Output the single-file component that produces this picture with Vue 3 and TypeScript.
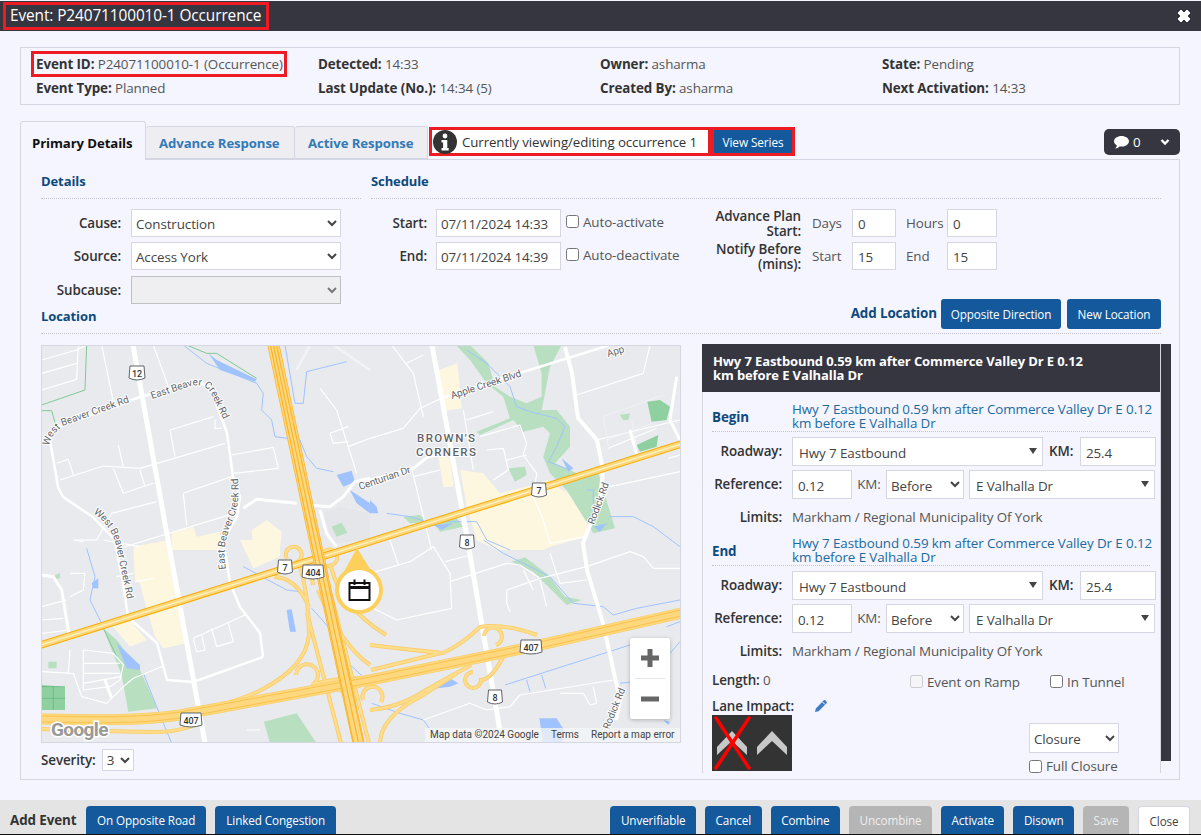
<script setup lang="ts">
interface Field { label: string; value: string; boxed?: boolean }
interface FooterButton { text: string; disabled?: boolean; plain?: boolean }
interface Shield { x: number; y: number; label: string; w: number }

const infoFields: Field[] = [
  { label: 'Event ID:', value: 'P24071100010-1 (Occurrence)', boxed: true },
  { label: 'Detected:', value: '14:33' },
  { label: 'Owner:', value: 'asharma' },
  { label: 'State:', value: 'Pending' },
  { label: 'Event Type:', value: 'Planned' },
  { label: 'Last Update (No.):', value: '14:34 (5)' },
  { label: 'Created By:', value: 'asharma' },
  { label: 'Next Activation:', value: '14:33' }
];

const rightButtons: FooterButton[] = [
  { text: 'Unverifiable' },
  { text: 'Cancel' },
  { text: 'Combine' },
  { text: 'Uncombine', disabled: true },
  { text: 'Activate' },
  { text: 'Disown' },
  { text: 'Save', disabled: true },
  { text: 'Close', plain: true }
];

const locationText = 'Hwy 7 Eastbound 0.59 km after Commerce Valley Dr E 0.12 km before E Valhalla Dr';
const endpoints = ['Begin', 'End'];

// map shields, in map pixels
const shields: Shield[] = [
  { x: 96, y: 28, label: '12', w: 14 },
  { x: 244, y: 222, label: '7', w: 13 },
  { x: 272, y: 227, label: '404', w: 20 },
  { x: 150, y: 375, label: '407', w: 20 },
  { x: 498, y: 145, label: '7', w: 13 },
  { x: 426, y: 197, label: '8', w: 13 },
  { x: 490, y: 302, label: '407', w: 20 },
  { x: 454, y: 352, label: '8', w: 13 }
];

// ramps around the three interchanges
const ramps: string[] = [
  'M233,232 Q255,232 268,262',
  'M258,218 Q268,250 268,290 Q265,322 220,345 Q190,360 150,366',
  'M246,214 a8,8 0 1,1 10,3 Q270,222 272,240',
  'M281,216 a8,8 0 1,1 10,4 Q280,222 276,230',
  'M290,222 Q300,262 345,290',
  'M277,245 Q300,300 329,320',
  'M255,330 a11,11 0 1,1 16,10 Q300,330 340,335',
  'M322,355 a10,10 0 1,1 18,2',
  'M329,300 Q370,305 402,308 Q420,300 439,282 Q462,278 496,290',
  'M339,398 Q340,372 379,352 L416,328',
  'M316,398 Q322,370 300,345',
  'M329,365 Q360,362 385,345 L430,320',
  'M443,291 a9,9 0 1,1 12,9',
  'M432,327 a8,8 0 1,0 8,8 Q450,335 462,312',
  'M0,384 Q60,386 110,387 Q135,388 160,378',
  'M330,325 L400,308',
  'M266,268 L300,398',
  'M290,250 L328,398'
];
</script>

<template>
  <div class="modal">
    <header class="title-bar">
      <span class="title-box">Event: P24071100010-1 Occurrence</span>
      <svg class="close-x" viewBox="0 0 16 16" width="16" height="16">
        <path d="M2 5l3-3 3 3 3-3 3 3-3 3 3 3-3 3-3-3-3 3-3-3 3-3z" fill="#fff" stroke="#fff" stroke-linejoin="round" />
      </svg>
    </header>

    <section class="info-box">
      <div v-for="f in infoFields" :key="f.label" class="info-cell">
        <span :class="{ 'red-box': f.boxed }"><b>{{ f.label }}</b> {{ f.value }}</span>
      </div>
    </section>

    <nav class="tabs">
      <div class="tab active">Primary Details</div>
      <div class="tab adv">Advance Response</div>
      <div class="tab last">Active Response</div>
      <div class="occurrence">
        <svg width="24" height="24" viewBox="0 0 24 24">
          <circle cx="12" cy="12" r="12" fill="#333" />
          <circle cx="12" cy="6" r="2.4" fill="#fff" />
          <path d="M8.5 10h5.8v8h1.4v2.5H8.5V18h1.6v-5.5H8.5z" fill="#fff" />
        </svg>
        <span>Currently viewing/editing occurrence 1</span>
      </div>
      <div class="series-box"><button class="btn series">View Series</button></div>
      <div class="comments">
        <svg width="15" height="13" viewBox="0 0 15 13">
          <path d="M7.5 0C3.4 0 0 2.3 0 5.3c0 1.700 1.100 3.200 2.900 4.200-.3 1.200-1 2.200-1.700 3 1.700-.2 3.300-1 4.400-2.100.6.100 1.200.2 1.900.2 4.100 0 7.500-2.300 7.500-5.300S11.600 0 7.500 0z" fill="#fff" />
        </svg>
        <span>0</span>
        <svg class="chev" width="10" height="8" viewBox="0 0 10 8">
          <path d="M1.500 2 5 5.500 8.500 2" fill="none" stroke="#fff" stroke-width="2.400" />
        </svg>
      </div>
    </nav>

    <main class="panel">
      <div class="top">
        <div class="details">
          <h3 class="head">Details</h3>
          <div class="form-row">
            <label>Cause:</label>
            <select class="field wide"><option>Construction</option></select>
          </div>
          <div class="form-row">
            <label>Source:</label>
            <select class="field wide"><option>Access York</option></select>
          </div>
          <div class="form-row sub">
            <label>Subcause:</label>
            <select class="field wide" disabled><option></option></select>
          </div>
        </div>
        <div class="schedule">
          <h3 class="head">Schedule</h3>
          <div class="schedule-body">
            <div class="dates">
              <div class="form-row">
                <label class="short">Start:</label>
                <input class="field date" value="07/11/2024 14:33" />
                <label class="check"><input type="checkbox" />Auto-activate</label>
              </div>
              <div class="form-row">
                <label class="short">End:</label>
                <input class="field date" value="07/11/2024 14:39" />
                <label class="check"><input type="checkbox" />Auto-deactivate</label>
              </div>
            </div>
            <div class="plans">
              <div class="form-row">
                <label class="plan-label">Advance Plan Start:</label>
                <span class="unit first">Days</span>
                <input class="field tiny" value="0" />
                <span class="unit">Hours</span>
                <input class="field small" value="0" />
              </div>
              <div class="form-row">
                <label class="plan-label">Notify Before (mins):</label>
                <span class="unit first">Start</span>
                <input class="field tiny" value="15" />
                <span class="unit">End</span>
                <input class="field small" value="15" />
              </div>
            </div>
          </div>
        </div>
      </div>

      <div class="location-head">
        <h3>Location</h3>
        <div class="location-actions">
          <b>Add Location</b>
          <button class="btn tall">Opposite Direction</button>
          <button class="btn tall">New Location</button>
        </div>
      </div>

      <div class="location-body">
        <div class="map-col">
          <div class="map">
            <svg viewBox="0 0 640 398" width="640" height="398">
              <rect width="640" height="398" fill="#e8eaed" />

              <!-- north west -->
              <g transform="translate(-1,-5) scale(.3333)">
                <path class="cream" d="M395 580L460 560 470 590 540 575 545 630H395zM635 570L680 540 725 575 720 630H640z" />
                <path d="M850 520L900 500 990 520V600L880 610z" fill="#e4e6e9" />
                <path class="park" d="M875 560L905 548 922 578 890 590z" />
                <path class="water" d="M890 405L935 392 945 425 910 440zM930 450L990 490V520L950 490z" />
                <path class="water" d="M505 40L530 60 650 118 645 125 540 90z" />
                <path class="trail" d="M140 15L135 150 5 195M5 212H35L50 265M440 15L500 40 530 40 650 115" />
                <path class="stream" d="M430 15L500 70 650 130 670 160 665 210 695 240 705 290 780 300 800 350 830 385 880 395M735 15L765 190 790 190 800 95 920 65" />
                <path class="road" d="M5 60L110 30 140 15M5 100L110 70M5 150L110 118 115 15M185 15L220 185M340 15L385 140M60 420L190 378 300 385 555 310M50 370L85 358 100 405M390 270L520 230M390 270L405 350M235 315L250 380M220 385L250 460 340 430M300 390L315 440M575 345L700 322 715 385 580 400M430 460L575 410M430 460L440 555M840 145L890 210 950 400M870 280L925 260M870 280L880 310 925 305M925 320L990 295M105 600H170L215 520 350 485M240 625L600 515M525 240L525 265H545" />
                <path class="road wide-road" d="M610 505L650 478 770 490M805 495L870 500 910 470 945 425 990 415M840 510L860 580 890 620" />
                <path d="M770 90L810 15M880 15L990 90" stroke="#f1f3f4" stroke-width="8" fill="none" />
              </g>

              <!-- north east -->
              <g transform="translate(329,-5) scale(.3333)">
                <path class="cream" d="M207 90L262 70 275 205 225 212zM205 350L240 350 250 440 220 440zM270 390L340 400 390 460 490 435 530 420 560 440 670 500 650 590 540 620 520 630H380L320 600 290 500 280 440z" />
                <path class="park" d="M258 15H300L355 70 375 140 420 170 470 190 515 170 515 100 490 15H575L540 80 525 160 515 210 560 210 600 260V320L555 370 620 400H685L735 565 670 580 590 450 540 400 520 350 540 280 520 260 460 275 430 240 330 285 320 275 420 235 400 170 350 130 300 60zM415 385L465 380 470 405 435 425zM750 225L780 220 775 240 760 240zM100 530L150 525 170 545 120 550zM190 545L260 535 280 560 210 575z" />
                <path class="park dark" d="M832 185L870 180 900 200 890 240 845 245zM800 315L865 285 860 320 810 335z" />
                <path class="water" d="M0 480L20 500 25 520H0zM190 555L250 550 215 570zM670 560L710 550 690 575zM575 355L610 385 595 395z" />
                <path class="stream" d="M290 30L350 70 420 140 440 200 480 215 560 235 585 260 560 320 535 365 600 390M50 520L120 530 170 545 320 545 350 600 420 630M720 530L790 530 850 560 930 620M650 450L670 450 670 500" />
                <path class="road" d="M65 15L130 100 160 230M0 295L100 265 150 205 215 175M290 240L370 215M330 290L450 255 470 310 460 345 500 400 490 470 520 540 540 610 650 590M350 330L400 325 415 390 370 420M125 385L160 530 185 630M620 165L820 100 840 15M680 300L930 240M720 440L930 395M715 325L860 265M895 355L930 345M130 410L210 390M410 360L470 345M280 210L310 390M110 70L160 45" />
                <path d="M700 230L880 165M700 230L715 320M785 240L800 320M710 300L850 250" stroke="#f1f3f4" stroke-width="2.500" fill="none" />
                <path class="road wide-road" d="M0 420L130 385 175 350 210 345M920 110L900 240 930 300" />
                <path class="road wide-road" d="M780 270L800 345" />
              </g>

              <!-- south west -->
              <g transform="translate(-1,195) scale(.3333)">
                <path class="cream" d="M280 20L385 0 410 110 425 180 440 310 370 325 345 290 315 190 300 130 285 120zM600 0H720V50L640 85zM210 250L270 240 320 300 270 320z" />
                <path class="park" d="M190 265L230 300 300 390 345 490 350 505 265 515 245 405zM672 545L770 520 830 610H690zM45 105L60 100 60 115 45 118zM25 365H50V385H25z" />
                <path class="park dark" d="M5 435L75 440V510H5z" />
                <path class="water" d="M230 310L300 375V390L260 385zM740 210L755 208 768 275 750 275zM155 130L175 115V145L160 145z" />
                <path class="stream" d="M140 25L165 110 150 180 190 260M310 400L350 500 395 610M610 80L740 150 780 155M815 205L900 300 905 350 990 430" />
                <path class="trail" d="M190 265L230 350" />
                <path class="road" d="M5 200L80 180M90 100H135L130 150 90 170M130 330L220 340 250 375 240 420 210 440M130 370L240 370M130 400L240 400M130 430L240 410M130 330V450L210 440M5 395L100 400 125 470 200 490 250 440 280 415 370 378M90 330L85 400M460 295L615 225M460 295L470 335 495 330 485 285M515 265L530 320 580 305 565 250M620 570H660M190 0L300 20M5 240L70 235M5 280L90 270M100 0L130 5M230 110L280 100M285 125L340 115" />
                <path d="M5 440H75M40 440V510M5 475H75" stroke="#4caf6f" stroke-width="1.500" fill="none" />
                <path class="road wide-road" d="M5 105L40 110 65 150 90 300M195 420L215 475" />
              </g>

              <!-- south east -->
              <g transform="translate(329,195) scale(.3333)">
                <path class="park" d="M425 65L465 52 535 105 585 170 635 180 590 195 545 150 490 95z" />
                <path class="water" d="M200 445L245 418 265 430 240 440zM508 535H560L585 575 575 610H520zM880 540L900 545 895 555z" />
                <path class="stream" d="M405 435L780 315M470 420L480 455M515 405L527 445M340 0L400 40 540 110 610 190 700 200 730 225 800 205 930 180M5 490L90 520 160 540 210 610M900 340L930 305M750 430L790 425M890 260L930 245" />
                <path class="road" d="M0 100L120 65 190 20 240 100 245 205 80 240 0 200M225 65L300 45M240 125L410 70 450 75 510 115 650 80 780 35 820 50 850 85H930M410 150L510 115M410 150V190L420 215M460 90L490 150M510 120L530 200M540 40L570 130 650 120M160 540L300 490 350 510 420 500 450 465 730 420M570 460H640L660 495 680 490 670 440M60 0L85 75" />
              </g>

              <!-- arterial roads -->
              <path class="major" d="M92 0L127 195 164 398" />
              <path class="major" d="M391 0L426 192 461 398" />
              <path class="major thin" d="M524 2L531 28 537 73 556 95 562 125 559 155 542 198 546 225 562 278 579 355 575 375" />
              <path class="major thinner" d="M401 53L482 27 569 0" />
              <path class="major thinner" d="M9 95L16 82 99 52 156 37 169 42 186 88 192 132 199 152 196 172 182 195 184 205 189 238 199 262 219 288 222 312" />
              <path class="major thinner" d="M9 95L17 142 22 152 52 172 71 192 74 195 82 238 87 272 116 298 126 335 152 337 222 312" />

              <!-- highways -->
              <path v-for="r in ramps" :key="r" class="ramp-edge" :d="r" />
              <path v-for="r in ramps" :key="r + 'i'" class="ramp" :d="r" />
              <path class="hw407-edge" d="M0 374C50 375 100 376 139 370L329 335 490 302 640 268" />
              <path class="hw407" d="M0 374C50 375 100 376 139 370L329 335 490 302 640 268" />
              <path class="hw407-line" d="M0 371C50 372 100 373 139 367L329 332 490 299 640 265M0 377C50 378 100 379 139 373L329 338 490 305 640 271" />
              <path class="hw7-edge" d="M0 300L640 99" />
              <path class="hw7" d="M0 300L640 99" />
              <path class="hw7-line" d="M0 300L640 99" />
              <path class="hw404-edge" d="M232 -2L276 205 318 400" />
              <path class="hw404" d="M232 -2L276 205 318 400" />
              <path class="hw404-line" d="M229 -2L272 205 313 400M232 -2L276 205 318 400M235 -2L280 205 323 400" />

              <!-- labels -->
              <path id="lb1" d="M8 101Q10 88 24 80L92 56" fill="none" />
              <path id="lb2" d="M111 54L150 41Q163 38 170 48L183 76" fill="none" />
              <path id="lb3" d="M52 168Q70 180 75 200L87 258" fill="none" />
              <path id="lb4" d="M185 224Q180 200 192 175Q199 160 197 133" fill="none" />
              <text class="lbl"><textPath href="#lb1">West Beaver Creek Rd</textPath></text>
              <text class="lbl"><textPath href="#lb2">East Beaver Creek Rd</textPath></text>
              <text class="lbl"><textPath href="#lb3">West Beaver Creek Rd</textPath></text>
              <text class="lbl"><textPath href="#lb4">East Beaver Creek Rd</textPath></text>
              <text class="lbl" transform="translate(411,54) rotate(-18)">Apple Creek Blvd</text>
              <text class="lbl" transform="translate(567,12) rotate(-17)">App</text>
              <text class="lbl" transform="translate(319,145) rotate(-19)">Centurian Dr</text>
              <text class="lbl" transform="translate(553,180) rotate(-70)">Rodick Rd</text>
              <text class="lbl" transform="translate(568,385) rotate(-68)">Rodick Rd</text>
              <text class="place" x="376" y="97">BROWN'S</text>
              <text class="place" x="375" y="111">CORNERS</text>

              <g v-for="s in shields" :key="s.x" :transform="`translate(${s.x},${s.y})`">
                <path
                  :d="`M${-s.w / 2} -7H${s.w / 2}L${s.w / 2 + 1} 5Q0 9 ${-s.w / 2 - 1} 5Z`"
                  fill="#fff"
                  stroke="#5f6368"
                  stroke-width="1"
                />
                <text class="shield" y="3.500" text-anchor="middle">{{ s.label }}</text>
              </g>

              <!-- event marker -->
              <path d="M316 203L300 232H334Z" fill="#fdd05c" />
              <circle cx="318" cy="245" r="24" fill="#fdd05c" />
              <circle cx="318" cy="245" r="20" fill="#fff" />
              <g fill="none" stroke="#111" stroke-width="2">
                <rect x="308.500" y="238" width="20" height="17" />
                <path d="M308.500 242.500H328.500" stroke-width="3" />
                <path d="M313.500 234.500V240M323.500 234.500V240" />
              </g>

              <text class="google" x="10" y="391">Google</text>
            </svg>
            <div class="zoom-ctl">
              <svg width="40" height="81" viewBox="0 0 40 81">
                <path d="M11 20H29M20 11V29" stroke="#666" stroke-width="5" />
                <path d="M5 40.500H35" stroke="#e6e6e6" />
                <path d="M11 61H29" stroke="#666" stroke-width="5" />
              </svg>
            </div>
            <div class="attribution">
              <span>Map data ©2024 Google</span>
              <span>Terms</span>
              <span>Report a map error</span>
            </div>
          </div>
          <div class="severity">
            <b>Severity:</b>
            <select class="sev"><option>3</option></select>
          </div>
        </div>

        <div class="loc-wrap">
          <div class="loc-panel">
            <div class="loc-title">Hwy 7 Eastbound 0.59 km after Commerce Valley Dr E 0.12 km before E Valhalla Dr</div>
            <div v-for="name in endpoints" :key="name" class="endpoint">
              <div class="ep-head">
                <b>{{ name }}</b>
                <span>{{ locationText }}</span>
              </div>
              <div class="ep-row">
                <label>Roadway:</label>
                <div class="field combo road-combo">Hwy 7 Eastbound<i class="tri" /></div>
                <b class="km">KM:</b>
                <input class="field km-input" value="25.4" />
              </div>
              <div class="ep-row">
                <label>Reference:</label>
                <input class="field ref-input" value="0.12" />
                <span class="km-light">KM:</span>
                <select class="field before"><option>Before</option></select>
                <div class="field combo ref-combo">E Valhalla Dr<i class="tri" /></div>
              </div>
              <div class="ep-limits">
                <label>Limits:</label>
                <span>Markham / Regional Municipality Of York</span>
              </div>
            </div>
            <div class="length-row">
              <span class="length"><b>Length:</b> 0</span>
              <label class="check ramp-check"><input type="checkbox" disabled />Event on Ramp</label>
              <label class="check"><input type="checkbox" />In Tunnel</label>
            </div>
            <div class="impact-head">
              <b>Lane Impact:</b>
              <svg width="14" height="14" viewBox="0 0 14 14">
                <path d="M1 13l.8-3.600L9.600 1.600a1.400 1.400 0 0 1 2 0l.8.8a1.400 1.400 0 0 1 0 2L4.600 12.200z" fill="#3f7cc4" />
                <path d="M8.500 3l2.500 2.500" stroke="#fff" />
              </svg>
            </div>
            <div class="impact-body">
              <svg width="80" height="56" viewBox="0 0 80 56">
                <rect width="80" height="56" fill="#333" />
                <path d="M5 32L20 16 35 32V40L20 26 5 40zM45 32L60 16 75 32V40L60 26 45 40z" fill="#c8c8c8" />
                <path d="M4 3L37 53M37 3L4 53" stroke="#f00" stroke-width="3.500" stroke-linecap="round" />
              </svg>
              <div class="closure">
                <select class="field closure-select"><option>Closure</option></select>
                <label class="check"><input type="checkbox" />Full Closure</label>
              </div>
            </div>
          </div>
          <div class="scrollbar"></div>
        </div>
      </div>
    </main>

    <footer class="footer">
      <b class="add-event">Add Event</b>
      <button class="btn foot">On Opposite Road</button>
      <button class="btn foot">Linked Congestion</button>
      <div class="foot-right">
        <button
          v-for="b in rightButtons"
          :key="b.text"
          class="btn foot"
          :class="{ disabled: b.disabled, plain: b.plain }"
        >{{ b.text }}</button>
      </div>
    </footer>
  </div>
</template>

<style>
html, body { margin: 0; background: #f4f5fe; }
</style>

<style scoped>
.modal {
  width: 1201px;
  height: 835px;
  overflow: hidden;
  position: relative;
  background: #f4f5fe;
  font-family: "Open Sans", "Noto Sans", sans-serif;
  font-size: 13.400px;
  color: #555;
  letter-spacing: -0.1px;
  display: flex;
  flex-direction: column;
}
b, label { color: #333; font-weight: 600; }

.title-bar {
  margin-top: 1px;
  height: 30px;
  flex: none;
  background: #363640;
  color: #fff;
  display: flex;
  align-items: center;
  justify-content: space-between;
  padding: 0 9px 0 3px;
  font-size: 15.400px;
}
.title-box {
  border: 3px solid #ed1c24;
  padding: 1px 5px 1px 4px;
  height: 20px;
  line-height: 20px;
}

.info-box {
  margin: 16px 21px 0 20px;
  height: 58px;
  flex: none;
  box-sizing: border-box;
  border: 1px solid #d5d6e4;
  display: grid;
  grid-template-columns: repeat(4, 282px);
  grid-template-rows: 24px 24px;
  padding: 4px 0 0 15px;
  align-items: center;
}
.info-cell { white-space: nowrap; }
.info-cell b { font-weight: 700; }
.red-box {
  border: 3px solid #ed1c24;
  margin-left: -5px;
  padding: 1px 1px 1px 2px;
}

.tabs {
  margin: 16px 21px 0 20px;
  height: 38px;
  flex: none;
  display: flex;
  align-items: flex-end;
  position: relative;
  z-index: 1;
}
.tab {
  height: 33px;
  box-sizing: border-box;
  line-height: 32px;
  padding: 0 13px;
  background: #ededf2;
  border: 1px solid #d5d6e4;
  border-width: 1px 1px 1px 0;
  color: #337ab7;
  font-weight: 700;
  font-size: 13.200px;
  border-radius: 3px 3px 0 0;
  white-space: nowrap;
}
.tab.adv { width: 149px; }
.tab.last { width: 133px; }
.tab.active {
  height: 39px;
  width: 126px;
  line-height: 42px;
  padding: 0 0 0 11px;
  background: #f4f5fe;
  color: #111;
  border-width: 1px 1px 0 1px;
  margin-bottom: -1px;
}
.occurrence {
  margin: 0 0 3px 1px;
  height: 29px;
  width: 282px;
  box-sizing: border-box;
  border: 3px solid #ed1c24;
  background: #fff;
  display: flex;
  align-items: center;
  gap: 5px;
  padding-left: 1px;
  color: #333;
  font-size: 13.300px;
  white-space: nowrap;
}
.series-box {
  margin-bottom: 3px;
  height: 29px;
  box-sizing: border-box;
  border: 3px solid #ed1c24;
  padding-left: 0;
}
.series {
  height: 23px;
  width: 78px;
  padding: 0;
  font-size: 11.800px;
  border-radius: 0;
}
.comments {
  margin: 0 0 4px auto;
  width: 76px;
  height: 26px;
  box-sizing: border-box;
  background: #363640;
  border-radius: 5px;
  color: #fff;
  display: flex;
  align-items: center;
  padding-left: 10px;
  gap: 4px;
  font-size: 13.400px;
}
.chev { margin-left: auto; margin-right: 10px; }

.panel {
  margin: 0 21px 0 20px;
  height: 621px;
  flex: none;
  box-sizing: border-box;
  border: 1px solid #d5d6e4;
  padding: 0 18px 0 20px;
}
.top { display: flex; gap: 10px; height: 139px; }
.details { width: 320px; flex: none; }
.schedule { flex: 1; }
.head {
  margin: 0 0 10px;
  height: 39px;
  box-sizing: border-box;
  border-bottom: 1px dotted #c4c5d4;
  line-height: 43px;
  font-size: 13px;
  font-weight: 700;
  color: #0c4a7d;
}
.form-row {
  display: flex;
  align-items: center;
  height: 28px;
  margin-bottom: 5px;
}
.form-row.sub { margin-top: 6px; }
.form-row > label {
  width: 80px;
  margin-right: 10px;
  text-align: right;
  flex: none;
}
.form-row > label.short { width: 56px; margin-right: 9px; }
.form-row > label.check {
  width: auto;
  margin: -3px 0 0 5px;
  text-align: left;
}
.field {
  box-sizing: border-box;
  background: #fff;
  border: 1px solid #d5d6e4;
  font: inherit;
  color: #444;
  letter-spacing: inherit;
  outline: none;
  padding: 2px 5px 0;
  border-radius: 0;
}
select.field { padding: 2px 0 0; }
.wide { width: 210px; height: 28px; }
.wide:disabled { background: #ededed; border-color: #aaa; }
.date { width: 125px; height: 28px; padding: 2px 4px 0; }
.check {
  display: inline-flex;
  align-items: center;
  gap: 4px;
  color: #555;
  font-weight: 400;
  white-space: nowrap;
}
.check input { margin: 0; width: 13px; height: 13px; }
.schedule-body { display: flex; }
.dates { width: 329px; flex: none; }
.form-row > label.plan-label {
  width: 101px;
  margin-right: 11px;
  line-height: 15px;
  padding-top: 1px;
}
.unit { width: 44px; flex: none; }
.unit.first { width: 40px; }
.unit:not(.first) { margin-left: 10px; width: 41px; }
.tiny { width: 44px; height: 28px; }
.small { width: 50px; height: 28px; }

.location-head {
  display: flex;
  justify-content: space-between;
  align-items: flex-start;
  height: 35px;
  box-sizing: border-box;
  border-bottom: 1px dotted #c4c5d4;
}
.location-head h3 {
  margin: 0;
  padding-top: 8px;
  font-size: 13px;
  font-weight: 700;
  color: #0c4a7d;
}
.location-actions { display: flex; align-items: center; gap: 6px; }
.location-actions b { color: #0c4a7d; font-weight: 700; margin-right: -2px; margin-top: -3px; font-size: 13.400px; }
.btn {
  background: #14599c;
  color: #fff;
  border: 0;
  font-family: inherit;
  letter-spacing: inherit;
  cursor: pointer;
}
.btn.tall {
  height: 30px;
  padding: 0;
  font-size: 11.700px;
  border-radius: 3px;
}
.location-actions .btn:nth-of-type(1) { width: 120px; }
.location-actions .btn:nth-of-type(2) { width: 94px; }

.location-body { display: flex; gap: 21px; margin-top: 10px; }
.map-col { width: 640px; flex: none; margin-top: 1px; }
.map {
  position: relative;
  width: 640px;
  height: 398px;
  overflow: hidden;
}
.map svg { display: block; }
.map::after {
  content: "";
  position: absolute;
  inset: 0;
  box-shadow: inset 0 0 0 1px #d5d6e4;
  pointer-events: none;
}
.cream { fill: #fef7e0; }
.park { fill: #b7dfc0; }
.park.dark { fill: #8ed0a0; }
.water { fill: #a0c3ff; }
.stream { fill: none; stroke: #a0c3ff; stroke-width: 3; stroke-linejoin: round; }
.trail { fill: none; stroke: #81c995; stroke-width: 3; }
.road { fill: none; stroke: #fff; stroke-width: 3.500; stroke-linejoin: round; }
.road.wide-road { stroke-width: 9; }
.major { fill: none; stroke: #fff; stroke-width: 5; stroke-linejoin: round; }
.major.thin { stroke-width: 4; }
.major.thinner { stroke-width: 2.500; }
.ramp-edge { fill: none; stroke: #fbcb62; stroke-width: 4; }
.ramp { fill: none; stroke: #fddc8c; stroke-width: 2.600; }
.hw407-edge { fill: none; stroke: #fbcb62; stroke-width: 11; }
.hw407 { fill: none; stroke: #fdd87e; stroke-width: 10; }
.hw407-line { fill: none; stroke: #fbc24e; stroke-width: 1; }
.hw7-edge { fill: none; stroke: #f9ab00; stroke-width: 7.500; }
.hw7 { fill: none; stroke: #fdd87e; stroke-width: 5.500; }
.hw7-line { fill: none; stroke: #fff3c4; stroke-width: 1.200; }
.hw404-edge { fill: none; stroke: #fab52e; stroke-width: 12; }
.hw404 { fill: none; stroke: #fdd87e; stroke-width: 10.500; }
.hw404-line { fill: none; stroke: #fab52e; stroke-width: 1.200; }
.lbl {
  font: 10px Roboto, sans-serif;
  fill: #5f6368;
  stroke: #fff;
  stroke-width: 2px;
  paint-order: stroke;
}
.place {
  font: 500 11.500px Roboto, sans-serif;
  letter-spacing: 1.400px;
  fill: #5f6368;
  stroke: #fff;
  stroke-width: 2px;
  paint-order: stroke;
}
.shield { font: 500 9px Roboto, sans-serif; fill: #333; }
.google {
  font: 700 19px Roboto, sans-serif;
  letter-spacing: -0.600px;
  fill: #999;
  stroke: #fff;
  stroke-width: 3px;
  paint-order: stroke;
}
.zoom-ctl {
  position: absolute;
  left: 589px;
  top: 293px;
  width: 40px;
  height: 81px;
  background: #fff;
  border-radius: 2px;
  box-shadow: 0 1px 4px rgba(0, 0, 0, 0.25);
}
.attribution {
  position: absolute;
  right: 1px;
  bottom: 1px;
  width: 255px;
  height: 14px;
  display: flex;
  background: rgba(245, 245, 245, 0.75);
  font: 10px/14px Roboto, sans-serif;
  letter-spacing: 0;
  color: #444;
  white-space: nowrap;
}
.attribution span { padding-left: 5px; }
.attribution span + span { margin-left: 7px; }
.severity {
  display: flex;
  align-items: center;
  gap: 6px;
  margin-top: 6px;
}
.sev {
  height: 22px;
  width: 32px;
  background: #fff;
  border: 1px solid #d5d6e4;
  font: inherit;
  color: #444;
  border-radius: 0;
  padding: 0;
}

.loc-wrap { display: flex; align-items: flex-start; height: 429px; flex: none; }
.loc-panel {
  width: 459px;
  height: 429px;
  flex: none;
  box-sizing: border-box;
  border: 1px solid #d5d6e4;
  border-width: 0 1px;
}
.loc-title {
  margin-left: -1px;
  height: 48px;
  box-sizing: border-box;
  background: #363640;
  color: #fff;
  font-weight: 700;
  font-size: 13px;
  line-height: 14px;
  padding: 10px 70px 0 11px;
}
.scrollbar { width: 10px; height: 417px; background: #363640; flex: none; }
.endpoint { padding: 10px 0 0 9px; }
.endpoint + .endpoint { padding-top: 11px; }
.ep-head {
  display: flex;
  width: 438px;
  height: 30px;
  box-sizing: border-box;
  border-bottom: 1px dotted #c4c5d4;
  align-items: center;
}
.ep-head b { width: 80px; flex: none; color: #0c4a7d; font-weight: 700; }
.ep-head span {
  width: 365px;
  flex: none;
  color: #1c6a9e;
  line-height: 14px;
  margin-top: -1px;
}
.ep-row {
  display: flex;
  align-items: center;
  height: 29px;
  margin-top: 5px;
  margin-left: -9px;
}
.ep-row + .ep-row { margin-top: 4px; }
.ep-row > label {
  width: 79px;
  margin-right: 10px;
  text-align: right;
  flex: none;
  margin-top: -2px;
}
.ep-row .field { height: 29px; flex: none; }
.combo {
  position: relative;
  line-height: 27px;
  padding: 2px 0 0 6px;
}
.tri {
  position: absolute;
  right: 5px;
  top: 10px;
  border: 4px solid transparent;
  border-top: 6px solid #444;
  border-bottom: 0;
}
.road-combo { width: 251px; }
.km { margin: -2px 0 0 6px; width: 31px; flex: none; }
.km-input { width: 76px; }
.ref-input { width: 60px; }
.km-light { width: 34px; flex: none; text-align: center; margin-top: -2px; color: #555; }
.before { width: 78px; }
.ref-combo { width: 186px; margin-left: 5px; }
.ep-limits {
  display: flex;
  height: 16px;
  line-height: 16px;
  margin-top: 10px;
  margin-left: -9px;
}
.ep-limits label { width: 79px; margin-right: 10px; text-align: right; }
.length-row {
  display: flex;
  align-items: center;
  height: 20px;
  margin: 11px 0 0 9px;
}
.length { width: 198px; flex: none; }
.check.ramp-check { width: 140px; flex: none; }
.length-row .check { margin-top: 3px; }
.impact-head {
  display: flex;
  align-items: center;
  gap: 20px;
  height: 16px;
  margin: 8px 0 1px 9px;
}
.impact-body { display: flex; margin-left: 9px; }
.impact-body svg { display: block; }
.closure {
  margin: 8px 0 0 237px;
  display: flex;
  flex-direction: column;
  gap: 6px;
  align-items: flex-start;
  line-height: 14px;
}
.closure-select { width: 90px; height: 30px; }

.footer {
  margin-top: auto;
  height: 35px;
  flex: none;
  box-sizing: border-box;
  background: #e4e4e4;
  border-bottom: 1px solid #111;
  display: flex;
  align-items: flex-end;
  padding-left: 10px;
  gap: 9px;
}
.add-event {
  align-self: center;
  margin-top: 5px;
  font-weight: 700;
  font-size: 13.400px;
  width: 67px;
  white-space: nowrap;
}
.foot {
  height: 28px;
  padding: 0 11px;
  border-radius: 4px 4px 0 0;
  font-size: 11.700px;
}
.foot-right { display: flex; gap: 9px; margin-left: auto; margin-right: 11px; }
.foot-right .foot { padding: 0 10.500px; }
.foot.disabled { background: #b5b5b5; color: #eee; }
.foot.plain { background: #fff; color: #444; border: 1px solid #d5d6e4; border-bottom: 0; }
</style>
